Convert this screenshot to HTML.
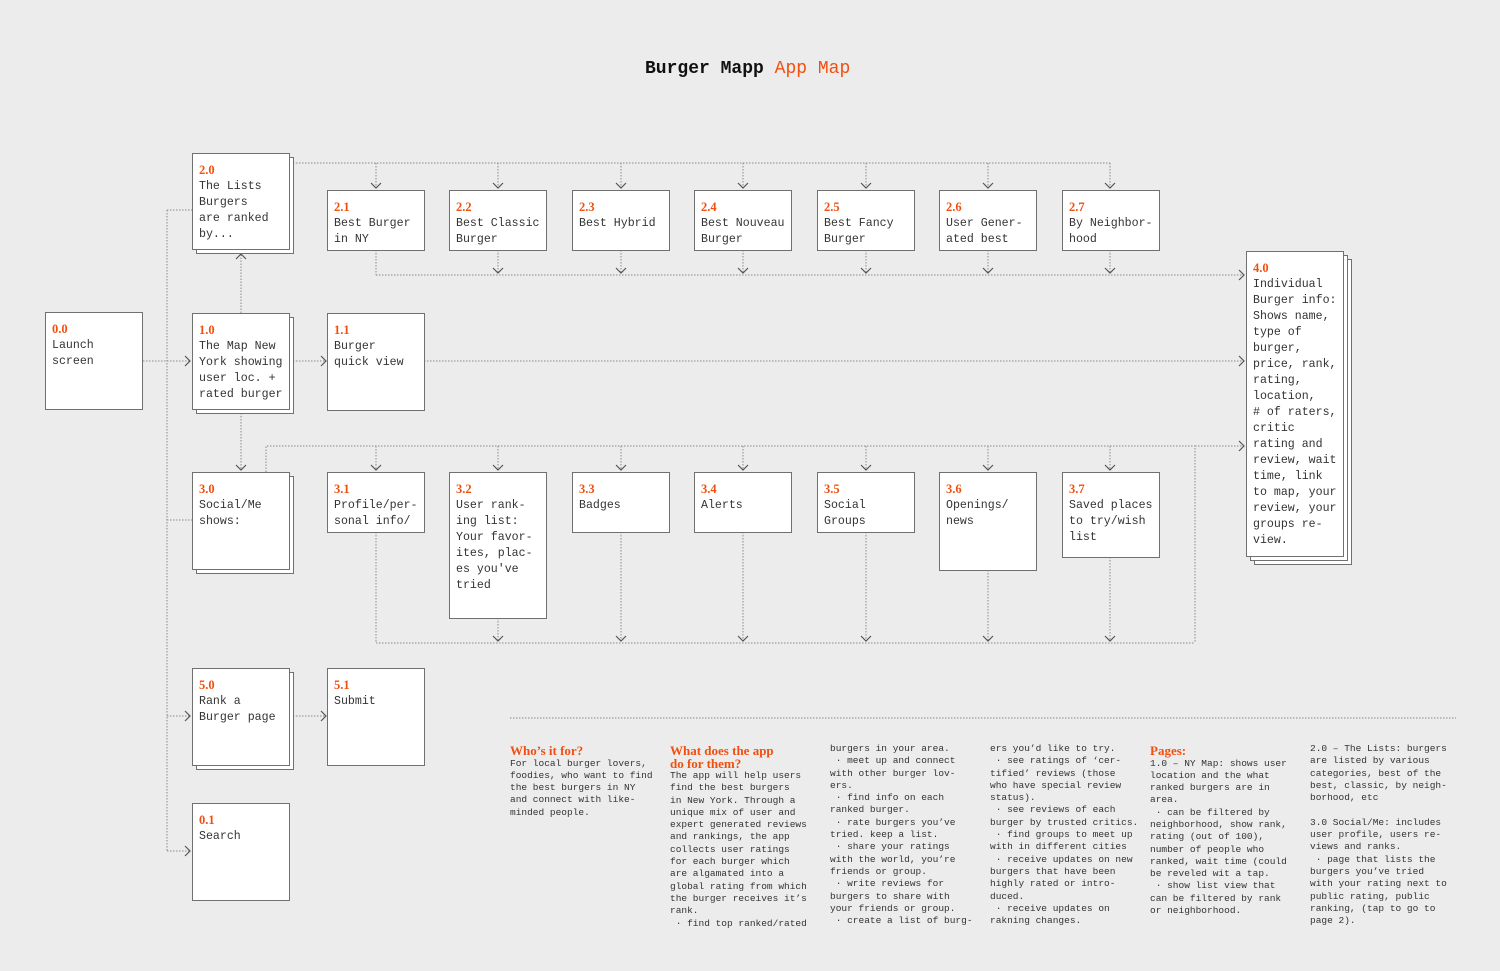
<!DOCTYPE html>
<html><head><meta charset="utf-8">
<style>
body{margin:0;width:1500px;height:971px;background:#ececec;position:relative;overflow:hidden;font-family:"Liberation Mono",monospace;color:#333}
.b{position:absolute;background:#fff;border:1.5px solid #707070;box-sizing:border-box;padding:6.5px 0 0 6px;font-size:11.6px;line-height:16px;white-space:pre;color:#333}
.b .n{font-family:"Liberation Serif",serif;font-weight:bold;color:#f0500f;font-size:12.5px;display:block;line-height:18.5px}
.s{position:absolute;background:#fff;border:1.5px solid #707070;box-sizing:border-box}
.t{position:absolute;font-size:9.5px;line-height:12.3px;white-space:pre;color:#333}
.h{font-family:"Liberation Serif",serif;font-weight:bold;color:#f0500f;font-size:13px;line-height:12.5px;display:block}
</style></head><body>
<div style="position:absolute;left:645px;top:59px;font-size:18px;white-space:pre"><b style="color:#111">Burger Mapp</b> <span style="color:#f0500f">App Map</span></div>

<svg width="1500" height="971" style="position:absolute;left:0;top:0" fill="none">
<g stroke="#8a8a8a" stroke-width="1" stroke-dasharray="1.5,1.5">
<path d="M143 361H167M167 210V851M167 210H192M167 361H190M167 520H192M167 716H190M167 851H190"/>
<path d="M290 163H1110M376 163V188M498 163V188M621 163V188M743 163V188M866 163V188M988 163V188M1110 163V188"/>
<path d="M376 250V275M498 250V273M621 250V273M743 250V273M866 250V273M988 250V273M1110 250V273M376 275H1244"/>
<path d="M241 313V254M241 410V470M290 361H326M424 361H1244"/>
<path d="M266 472V446H1195V643M376 446V470M498 446V470M621 446V470M743 446V470M866 446V470M988 446V470M1110 446V470M1195 446H1244"/>
<path d="M376 532V643M498 618V641M621 532V641M743 532V641M866 532V641M988 570V641M1110 557V641M376 643H1195"/>
<path d="M290 716H326M510 718H1456"/>
</g>
<g stroke="#555" stroke-width="1.2">
<path d="M371 183L376 188L381 183M493 183L498 188L503 183M616 183L621 188L626 183M738 183L743 188L748 183M861 183L866 188L871 183M983 183L988 188L993 183M1105 183L1110 188L1115 183"/>
<path d="M493 268L498 273L503 268M616 268L621 273L626 268M738 268L743 273L748 268M861 268L866 273L871 268M983 268L988 273L993 268M1105 268L1110 273L1115 268"/>
<path d="M1239 270L1244 275L1239 280M1239 356L1244 361L1239 366M1239 441L1244 446L1239 451M185 356L190 361L185 366M185 711L190 716L185 721M185 846L190 851L185 856M321 356L326 361L321 366M321 711L326 716L321 721"/>
<path d="M236 259L241 254L246 259M236 465L241 470L246 465"/>
<path d="M371 465L376 470L381 465M493 465L498 470L503 465M616 465L621 470L626 465M738 465L743 470L748 465M861 465L866 470L871 465M983 465L988 470L993 465M1105 465L1110 470L1115 465"/>
<path d="M493 636L498 641L503 636M616 636L621 641L626 636M738 636L743 641L748 636M861 636L866 641L871 636M983 636L988 641L993 636M1105 636L1110 641L1115 636"/>
</g>
</svg>

<div class="b" style="left:45px;top:312px;width:98px;height:98px"><span class="n">0.0</span>Launch
screen</div>

<div class="s" style="left:196px;top:157px;width:98px;height:97px"></div>
<div class="b" style="left:192px;top:153px;width:98px;height:97px"><span class="n">2.0</span>The Lists
Burgers
are ranked
by...</div>
<div class="s" style="left:196px;top:317px;width:98px;height:97px"></div>
<div class="b" style="left:192px;top:313px;width:98px;height:97px"><span class="n">1.0</span>The Map New
York showing
user loc. +
rated burger</div>
<div class="s" style="left:196px;top:476px;width:98px;height:98px"></div>
<div class="b" style="left:192px;top:472px;width:98px;height:98px"><span class="n">3.0</span>Social/Me
shows:</div>
<div class="s" style="left:196px;top:672px;width:98px;height:98px"></div>
<div class="b" style="left:192px;top:668px;width:98px;height:98px"><span class="n">5.0</span>Rank a
Burger page</div>
<div class="b" style="left:192px;top:803px;width:98px;height:98px"><span class="n">0.1</span>Search</div>

<div class="b" style="left:327px;top:190px;width:98px;height:61px"><span class="n">2.1</span>Best Burger
in NY</div>
<div class="b" style="left:449px;top:190px;width:98px;height:61px"><span class="n">2.2</span>Best Classic
Burger</div>
<div class="b" style="left:572px;top:190px;width:98px;height:61px"><span class="n">2.3</span>Best Hybrid</div>
<div class="b" style="left:694px;top:190px;width:98px;height:61px"><span class="n">2.4</span>Best Nouveau
Burger</div>
<div class="b" style="left:817px;top:190px;width:98px;height:61px"><span class="n">2.5</span>Best Fancy
Burger</div>
<div class="b" style="left:939px;top:190px;width:98px;height:61px"><span class="n">2.6</span>User Gener-
ated best</div>
<div class="b" style="left:1062px;top:190px;width:98px;height:61px"><span class="n">2.7</span>By Neighbor-
hood</div>

<div class="b" style="left:327px;top:313px;width:98px;height:98px"><span class="n">1.1</span>Burger
quick view</div>

<div class="b" style="left:327px;top:472px;width:98px;height:61px"><span class="n">3.1</span>Profile/per-
sonal info/</div>
<div class="b" style="left:449px;top:472px;width:98px;height:147px"><span class="n">3.2</span>User rank-
ing list:
Your favor-
ites, plac-
es you've
tried</div>
<div class="b" style="left:572px;top:472px;width:98px;height:61px"><span class="n">3.3</span>Badges</div>
<div class="b" style="left:694px;top:472px;width:98px;height:61px"><span class="n">3.4</span>Alerts</div>
<div class="b" style="left:817px;top:472px;width:98px;height:61px"><span class="n">3.5</span>Social
Groups</div>
<div class="b" style="left:939px;top:472px;width:98px;height:99px"><span class="n">3.6</span>Openings/
news</div>
<div class="b" style="left:1062px;top:472px;width:98px;height:86px"><span class="n">3.7</span>Saved places
to try/wish
list</div>

<div class="b" style="left:327px;top:668px;width:98px;height:98px"><span class="n">5.1</span>Submit</div>

<div class="s" style="left:1254px;top:259px;width:98px;height:306px"></div>
<div class="s" style="left:1250px;top:255px;width:98px;height:306px"></div>
<div class="b" style="left:1246px;top:251px;width:98px;height:306px"><span class="n">4.0</span>Individual
Burger info:
Shows name,
type of
burger,
price, rank,
rating,
location,
# of raters,
critic
rating and
review, wait
time, link
to map, your
review, your
groups re-
view.</div>

<div class="t" style="left:510px;top:745px"><span class="h">Who’s it for?</span>For local burger lovers,
foodies, who want to find
the best burgers in NY
and connect with like-
minded people.</div>
<div class="t" style="left:670px;top:745px"><span class="h">What does the app
do for them?</span>The app will help users
find the best burgers
in New York. Through a
unique mix of user and
expert generated reviews
and rankings, the app
collects user ratings
for each burger which
are algamated into a
global rating from which
the burger receives it’s
rank.
 · find top ranked/rated</div>
<div class="t" style="left:830px;top:743px">burgers in your area.
 · meet up and connect
with other burger lov-
ers.
 · find info on each
ranked burger.
 · rate burgers you’ve
tried. keep a list.
 · share your ratings
with the world, you’re
friends or group.
 · write reviews for
burgers to share with
your friends or group.
 · create a list of burg-</div>
<div class="t" style="left:990px;top:743px">ers you’d like to try.
 · see ratings of ‘cer-
tified’ reviews (those
who have special review
status).
 · see reviews of each
burger by trusted critics.
 · find groups to meet up
with in different cities
 · receive updates on new
burgers that have been
highly rated or intro-
duced.
 · receive updates on
rakning changes.</div>
<div class="t" style="left:1150px;top:745px"><span class="h">Pages:</span>1.0 – NY Map: shows user
location and the what
ranked burgers are in
area.
 · can be filtered by
neighborhood, show rank,
rating (out of 100),
number of people who
ranked, wait time (could
be reveled wit a tap.
 · show list view that
can be filtered by rank
or neighborhood.</div>
<div class="t" style="left:1310px;top:743px">2.0 – The Lists: burgers
are listed by various
categories, best of the
best, classic, by neigh-
borhood, etc

3.0 Social/Me: includes
user profile, users re-
views and ranks.
 · page that lists the
burgers you’ve tried
with your rating next to
public rating, public
ranking, (tap to go to
page 2).</div>
</body></html>
